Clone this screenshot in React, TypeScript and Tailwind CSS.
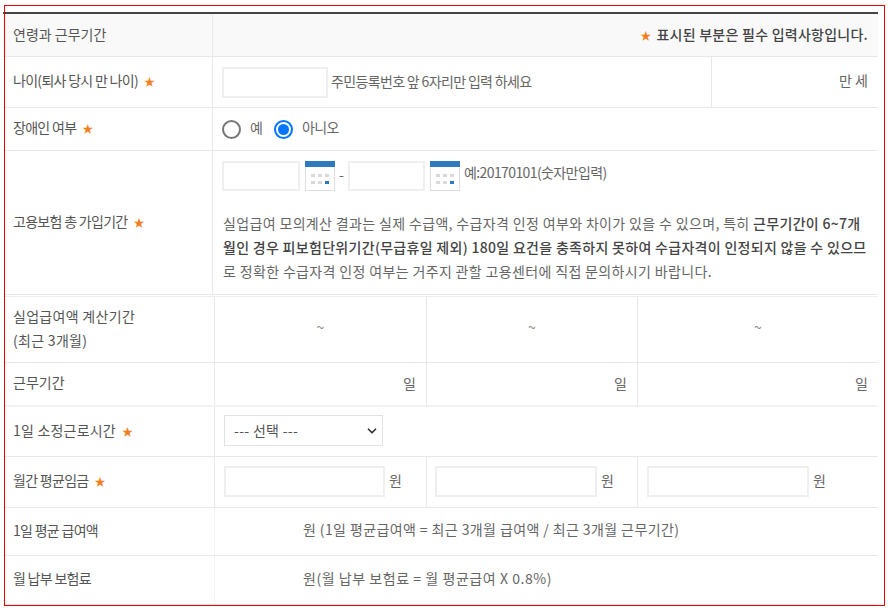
import {ChevronDown} from 'lucide-react'

const font = '[font-family:"Noto_Sans_CJK_KR","Noto_Sans",sans-serif]'

function Star() {
  return <span className="ml-[6px] mt-[2px] text-[11px] leading-none text-[#f47f20]">★</span>
}

function CalendarIcon() {
  return (
    <svg width="30" height="30" viewBox="0 0 30 30" className="block shrink-0">
      <rect x="0.5" y="0.5" width="29" height="29" fill="#fff" stroke="#dddddd" />
      <rect x="0" y="0" width="30" height="6" fill="#2f7abf" />
      <g fill="#d9d9d9">
        <rect x="6" y="13" width="4" height="3" />
        <rect x="13" y="13" width="4" height="3" />
        <rect x="20" y="13" width="4" height="3" />
        <rect x="6" y="20" width="4" height="3" />
        <rect x="13" y="20" width="4" height="3" />
      </g>
      <rect x="20" y="20" width="4" height="3" fill="#2f7abf" />
    </svg>
  )
}

function Box({className}: {className: string}) {
  return <div className={`shrink-0 border-2 border-[#efefef] bg-white ${className}`} />
}

function Row({label, star, height, children, thick, track}: {label: React.ReactNode; star?: boolean; height: string; children: React.ReactNode; thick?: boolean; track?: string}) {
  return (
    <div className={`flex ${height} ${thick ? 'border-b-[2px] border-[#f2f2f2]' : 'border-b border-[#e8e8e8]'}`}>
      <div className={`flex w-[211px] shrink-0 items-center pb-[3px] pl-[10px] text-[#555] ${track ?? ''}`}>
        {label}
        {star && <Star />}
      </div>
      {children}
    </div>
  )
}

function Cell({className, children}: {className?: string; children?: React.ReactNode}) {
  return <div className={`flex items-center border-l border-[#e8e8e8] ${className ?? ''}`}>{children}</div>
}

export default function App() {
  return (
    <div className={`relative h-[615px] w-[888px] overflow-hidden bg-white text-[14px] text-[#666] ${font}`}>
      <div className="w-[878px] pl-[3px] pt-[12px]">
        <div className="border-t-2 border-[#444]">
          {/* Upper table */}
          <div className="flex h-[43px] border-b border-[#e8e8e8] bg-[#f9f9f9]">
            <div className="flex w-[209px] shrink-0 items-center pb-[2px] pl-[10px] text-[#555]">연령과 근무기간</div>
            <div className="flex flex-1 items-center justify-end border-l border-[#e8e8e8] pb-[1px] pr-[10px] font-medium tracking-[0.25px] text-[#444]">
              <span className="mr-[5px] mt-[2px] text-[11px] leading-none text-[#f47f20]">★</span>
              표시된 부분은 필수 입력사항입니다.
            </div>
          </div>
          <Row label="나이(퇴사 당시 만 나이)" star height="h-[51px]" track="tracking-[-0.7px]">
            <Cell className="w-[499px] pl-[9px] -ml-[2px]">
              <Box className="h-[31px] w-[106px]" />
              <span className="ml-[3px] pb-[1px] tracking-[-0.65px]">주민등록번호 앞 6자리만 입력 하세요</span>
            </Cell>
            <Cell className="flex-1 justify-end pb-[3px] pr-[10px]">만 세</Cell>
          </Row>
          <Row label="장애인 여부" star height="h-[43px]" track="tracking-[-0.7px]">
            <Cell className="flex-1 -ml-[2px] pl-[9px]">
              <span className="h-[19px] w-[19px] rounded-full border-2 border-[#777] bg-white" />
              <span className="ml-[9px] pb-[3px]">예</span>
              <span className="ml-[11px] flex h-[19px] w-[19px] items-center justify-center rounded-full border-2 border-[#0075ff] bg-white">
                <span className="h-[11px] w-[11px] rounded-full bg-[#0075ff]" />
              </span>
              <span className="ml-[9px] pb-[3px] tracking-[-0.6px]">아니오</span>
            </Cell>
          </Row>
          <div className="flex h-[144px] border-b border-[#e8e8e8]">
            <div className="flex w-[209px] shrink-0 items-center pb-[3px] pl-[10px] tracking-[-0.7px] text-[#555]">
              고용보험 총 가입기간
              <Star />
            </div>
            <div className="flex-1 border-l border-[#e8e8e8] pl-[9px] pt-[10px]">
              <div className="flex items-start">
                <Box className="h-[30px] w-[78px]" />
                <span className="ml-[5px]"><CalendarIcon /></span>
                <span className="ml-[4px] mr-[5px] mt-[3px] w-[4px]">-</span>
                <Box className="h-[30px] w-[77px]" />
                <span className="ml-[5px]"><CalendarIcon /></span>
                <span className="ml-[4px] mt-[1px] tracking-[-0.6px]">예:20170101(숫자만입력)</span>
              </div>
              <p className="mt-[20px] ml-[1px] whitespace-nowrap leading-[24px] tracking-[0.35px]">
                실업급여 모의계산 결과는 실제 수급액, 수급자격 인정 여부와 차이가 있을 수 있으며, 특히{' '}
                <b className="font-medium tracking-[0.3px] text-[#444]">
                  근무기간이 6~7개
                  <br />
                  월인 경우 피보험단위기간(무급휴일 제외) 180일 요건을 충족하지 못하여 수급자격이 인정되지 않을 수 있으므
                </b>
                <br />
                로 정확한 수급자격 인정 여부는 거주지 관할 고용센터에 직접 문의하시기 바랍니다.
              </p>
            </div>
          </div>

          {/* Lower table */}
          <div className="h-[1px]" />
          <div className="border-t border-[#eeeeee]">
            <Row
              label={
                <span className="leading-[24px]">
                  실업급여액 계산기간
                  <br />
                  (최근 3개월)
                </span>
              }
              height="h-[66px]"
              track="tracking-[0.3px]"
            >
              <Cell className="w-[212px] justify-center pb-[4px] text-[#888]">~</Cell>
              <Cell className="w-[211px] justify-center pb-[4px] text-[#888]">~</Cell>
              <Cell className="flex-1 justify-center pb-[4px] text-[#888]">~</Cell>
            </Row>
          </div>
          <Row label="근무기간" height="h-[44px]" thick>
            <Cell className="w-[212px] justify-end pb-[2px] pr-[10px]">일</Cell>
            <Cell className="w-[211px] justify-end pb-[2px] pr-[10px]">일</Cell>
            <Cell className="flex-1 justify-end pb-[2px] pr-[10px]">일</Cell>
          </Row>
          <Row label="1일 소정근로시간" star height="h-[50px]" track="tracking-[0.2px]">
            <Cell className="flex-1 pl-[9px] pb-[2px]">
              <div className="flex h-[31px] w-[159px] items-center justify-between border border-[#e2e2e2] bg-white pb-[1px] pl-[9px] pr-[3px] tracking-[0.3px] text-[#555]">
                <span>--- 선택 ---</span>
                <ChevronDown size={14} strokeWidth={3} className="mt-[1px] text-[#333]" />
              </div>
            </Cell>
          </Row>
          <Row label="월간 평균임금" star height="h-[51px]" track="tracking-[-0.7px]">
            <Cell className="w-[212px] pl-[9px] pb-[1px]">
              <Box className="h-[31px] w-[161px]" />
              <span className="ml-[4px] pb-[2px]">원</span>
            </Cell>
            <Cell className="w-[211px] pl-[8px] pb-[1px]">
              <Box className="h-[31px] w-[162px]" />
              <span className="ml-[4px] pb-[2px]">원</span>
            </Cell>
            <Cell className="flex-1 pl-[9px] pb-[1px]">
              <Box className="h-[31px] w-[162px]" />
              <span className="ml-[4px] pb-[2px]">원</span>
            </Cell>
          </Row>
          <Row label="1일 평균 급여액" height="h-[48px]" track="tracking-[-0.7px]">
            <Cell className="flex-1 pl-[88px] pb-[5px] tracking-[0.4px] !border-[#f2f2f2]">원 (1일 평균급여액 = 최근 3개월 급여액 / 최근 3개월 근무기간)</Cell>
          </Row>
          <Row label="월 납부 보험료" height="h-[49px]" track="tracking-[-0.7px]">
            <Cell className="flex-1 pl-[88px] pb-[3px] tracking-[0.55px] !border-[#f2f2f2]">원(월 납부 보험료 = 월 평균급여 X 0.8%)</Cell>
          </Row>
        </div>
      </div>
      {/* Red annotation frame over the page */}
      <div className="pointer-events-none absolute left-[4px] top-[5px] h-[601px] w-[881px] border border-[#f00000]" />
    </div>
  )
}
